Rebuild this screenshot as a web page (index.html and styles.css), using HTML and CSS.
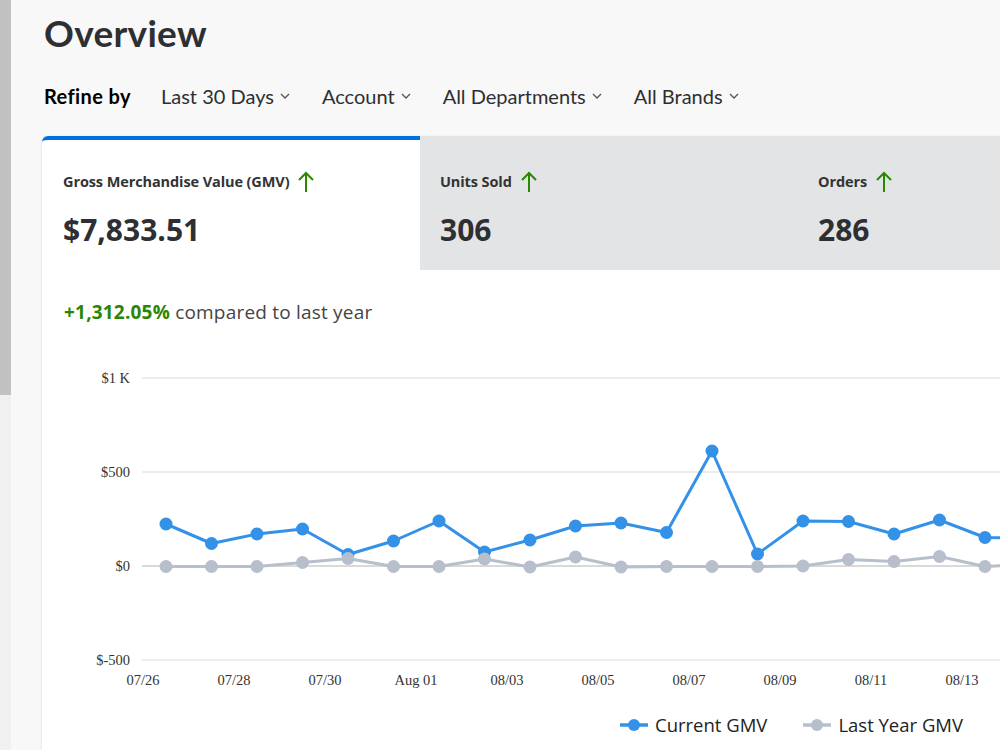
FILE: index.html
```html
<!DOCTYPE html>
<html lang="en">
<head>
<meta charset="utf-8">
<title>Overview</title>
<link rel="stylesheet" href="styles.css">
</head>
<body>
<div class="frame">
  <div class="scroll-track"><div class="scroll-thumb"></div></div>
  <main class="page">
    <h1 class="title">Overview</h1>
    <div class="refine">
      <span class="refine-label">Refine by</span>
      <button class="filter">Last 30 Days<svg class="chev" viewBox="0 0 10 6"><path d="M1 1l4 4 4-4"/></svg></button>
      <button class="filter">Account<svg class="chev" viewBox="0 0 10 6"><path d="M1 1l4 4 4-4"/></svg></button>
      <button class="filter">All Departments<svg class="chev" viewBox="0 0 10 6"><path d="M1 1l4 4 4-4"/></svg></button>
      <button class="filter">All Brands<svg class="chev" viewBox="0 0 10 6"><path d="M1 1l4 4 4-4"/></svg></button>
    </div>

    <section class="card">
      <div class="tabs">
        <div class="tab active">
          <div class="tab-label">Gross Merchandise Value (GMV)<svg class="up" viewBox="0 0 16 22"><path d="M8 21V2M1 9l7-7 7 7"/></svg></div>
          <div class="tab-value">$7,833.51</div>
        </div>
        <div class="tab">
          <div class="tab-label">Units Sold<svg class="up" viewBox="0 0 16 22"><path d="M8 21V2M1 9l7-7 7 7"/></svg></div>
          <div class="tab-value">306</div>
        </div>
        <div class="tab">
          <div class="tab-label">Orders<svg class="up" viewBox="0 0 16 22"><path d="M8 21V2M1 9l7-7 7 7"/></svg></div>
          <div class="tab-value">286</div>
        </div>
      </div>

      <p class="compare"><strong class="pos">+1,312.05%</strong> compared to last year</p>

      <svg class="chart" viewBox="0 0 958 350" width="958" height="350">
        <g class="grid">
          <line x1="100" y1="28" x2="958" y2="28"/>
          <line x1="100" y1="122" x2="958" y2="122"/>
          <line x1="100" y1="310" x2="958" y2="310"/>
          <line class="zero" x1="100" y1="216" x2="958" y2="216"/>
        </g>
        <g class="ylab">
          <text x="88" y="33">$1 K</text>
          <text x="88" y="127">$500</text>
          <text x="88" y="221">$0</text>
          <text x="88" y="315">$-500</text>
        </g>
        <g class="xlab">
          <text x="101" y="335">07/26</text>
          <text x="192" y="335">07/28</text>
          <text x="283" y="335">07/30</text>
          <text x="374" y="335">Aug 01</text>
          <text x="465" y="335">08/03</text>
          <text x="556" y="335">08/05</text>
          <text x="647" y="335">08/07</text>
          <text x="738" y="335">08/09</text>
          <text x="829" y="335">08/11</text>
          <text x="920" y="335">08/13</text>
        </g>
        <g class="series current">
          <polyline points="124,174 169.5,193.5 215,184 260.5,179 306,204.5 351.5,191 397,171 442.5,202 488,190 533.5,176 579,173 624.5,182.5 670,101 715.5,204 761,171 806.5,171.5 852,184 897.5,170 943,187.5 988.5,188.5"/>
          <circle cx="124" cy="174" r="6.5"/><circle cx="169.5" cy="193.5" r="6.5"/><circle cx="215" cy="184" r="6.5"/>
          <circle cx="260.5" cy="179" r="6.5"/><circle cx="306" cy="204.5" r="6.5"/><circle cx="351.5" cy="191" r="6.5"/>
          <circle cx="397" cy="171" r="6.5"/><circle cx="442.5" cy="202" r="6.5"/><circle cx="488" cy="190" r="6.5"/>
          <circle cx="533.5" cy="176" r="6.5"/><circle cx="579" cy="173" r="6.5"/><circle cx="624.5" cy="182.5" r="6.5"/>
          <circle cx="670" cy="101" r="6.5"/><circle cx="715.5" cy="204" r="6.5"/><circle cx="761" cy="171" r="6.5"/>
          <circle cx="806.5" cy="171.5" r="6.5"/><circle cx="852" cy="184" r="6.5"/><circle cx="897.5" cy="170" r="6.5"/>
          <circle cx="943" cy="187.5" r="6.5"/><circle cx="988.5" cy="188.5" r="6.5"/>
        </g>
        <g class="series last">
          <polyline points="124,216.5 169.5,216.5 215,216.5 260.5,212.5 306,208.5 351.5,216.5 397,216.5 442.5,209 488,217 533.5,207 579,217 624.5,216.5 670,216.5 715.5,216.5 761,216 806.5,209.5 852,211.5 897.5,206.5 943,216.5 988.5,214"/>
          <circle cx="124" cy="216.5" r="6.5"/><circle cx="169.5" cy="216.5" r="6.5"/><circle cx="215" cy="216.5" r="6.5"/>
          <circle cx="260.5" cy="212.5" r="6.5"/><circle cx="306" cy="208.5" r="6.5"/><circle cx="351.5" cy="216.5" r="6.5"/>
          <circle cx="397" cy="216.5" r="6.5"/><circle cx="442.5" cy="209" r="6.5"/><circle cx="488" cy="217" r="6.5"/>
          <circle cx="533.5" cy="207" r="6.5"/><circle cx="579" cy="217" r="6.5"/><circle cx="624.5" cy="216.5" r="6.5"/>
          <circle cx="670" cy="216.5" r="6.5"/><circle cx="715.5" cy="216.5" r="6.5"/><circle cx="761" cy="216" r="6.5"/>
          <circle cx="806.5" cy="209.5" r="6.5"/><circle cx="852" cy="211.5" r="6.5"/><circle cx="897.5" cy="206.5" r="6.5"/>
          <circle cx="943" cy="216.5" r="6.5"/><circle cx="988.5" cy="214" r="6.5"/>
        </g>
      </svg>

      <div class="legend">
        <span class="legend-item"><svg class="key current" viewBox="0 0 28 14"><line x1="0" y1="7" x2="28" y2="7"/><circle cx="14" cy="7" r="6"/></svg>Current GMV</span>
        <span class="legend-item"><svg class="key last" viewBox="0 0 28 14"><line x1="0" y1="7" x2="28" y2="7"/><circle cx="14" cy="7" r="6"/></svg>Last Year GMV</span>
      </div>
    </section>
  </main>
</div>
</body>
</html>
```

FILE: styles.css
```css
* { box-sizing: border-box; }

html, body {
  margin: 0;
  height: 100%;
  overflow: hidden;
}

body {
  background: #f8f8f8;
  color: #2e2f32;
  font-family: "Open Sans", "Noto Sans", sans-serif;
}

.frame {
  display: flex;
  height: 750px;
}

.scroll-track {
  flex: 0 0 11px;
  background: #f0f0f0;
}

.scroll-thumb {
  height: 395px;
  background: #c1c1c1;
}

.page {
  flex: 0 0 auto;
  width: 1200px;
  padding-left: 33px;
}

.title {
  margin: 0;
  padding-top: 9px;
  font-family: "Lato", sans-serif;
  font-weight: 700;
  font-size: 37px;
  line-height: 48px;
  letter-spacing: 0.3px;
  color: #2e2f32;
}

.refine {
  display: flex;
  align-items: center;
  height: 40px;
  margin-top: 19px;
  font-family: "Lato", sans-serif;
  font-size: 20px;
}

.refine-label {
  font-weight: 700;
  color: #000;
  letter-spacing: 0.4px;
  margin-right: 30px;
}

.filter {
  display: inline-flex;
  align-items: center;
  gap: 6px;
  margin-right: 32px;
  padding: 0;
  border: 0;
  background: none;
  font: inherit;
  color: #2e2f32;
}

.chev {
  width: 10px;
  height: 6px;
  fill: none;
  stroke: #555;
  stroke-width: 1.3;
}

.card {
  margin-top: 20px;
  margin-left: -2px;
  width: 1134px;
  background: #fff;
  border-radius: 6px 0 0 0;
  box-shadow: 0 1px 3px rgba(0, 0, 0, 0.12);
  height: 640px;
}

.tabs {
  display: flex;
}

.tab {
  flex: 0 0 378px;
  height: 134px;
  padding: 34px 20px 0;
  background: #e3e4e5;
}

.tab.active {
  background: #fff;
  border-top: 4px solid #0071dc;
  border-radius: 6px 0 0 0;
  padding-top: 30px;
  padding-left: 21px;
}

.tab-label {
  display: flex;
  align-items: center;
  gap: 9px;
  font-size: 14.5px;
  font-weight: 700;
  line-height: 24px;
  color: #333;
  letter-spacing: -0.1px;
}

.up {
  width: 16px;
  height: 22px;
  fill: none;
  stroke: #2a8703;
  stroke-width: 2;
}

.tab-value {
  margin-top: 16px;
  font-size: 30px;
  font-weight: 700;
  line-height: 40px;
  color: #2e2f32;
}

.compare {
  margin: 29px 0 0 22px;
  font-size: 19px;
  line-height: 26px;
  letter-spacing: 0.2px;
  color: #444;
}

.pos {
  color: #2a8703;
  font-weight: 700;
}

.chart {
  display: block;
  margin-top: 25px;
}

.grid line {
  stroke: #e6e6e6;
  stroke-width: 1.5;
}

.grid line.zero {
  stroke: #ccc;
}

.ylab text,
.xlab text {
  font-family: "Liberation Serif", serif;
  font-size: 14.5px;
  fill: #333;
}

.ylab text { text-anchor: end; }
.xlab text { text-anchor: middle; }

.series polyline {
  fill: none;
  stroke-width: 3;
  stroke-linejoin: round;
}

.series.current polyline { stroke: #3391e8; }
.series.current circle { fill: #3391e8; }
.series.last polyline { stroke: #b6bfcb; }
.series.last circle { fill: #b6bfcb; }

.legend {
  display: flex;
  gap: 36px;
  margin-top: 13px;
  padding-left: 578px;
  font-size: 18.5px;
  line-height: 24px;
  color: #222;
}

.legend-item {
  display: inline-flex;
  align-items: center;
  gap: 7px;
}

.key {
  width: 28px;
  height: 14px;
}

.key line { stroke-width: 3.5; }
.key.current line { stroke: #3391e8; }
.key.current circle { fill: #3391e8; }
.key.last line { stroke: #b6bfcb; }
.key.last circle { fill: #b6bfcb; }
```
